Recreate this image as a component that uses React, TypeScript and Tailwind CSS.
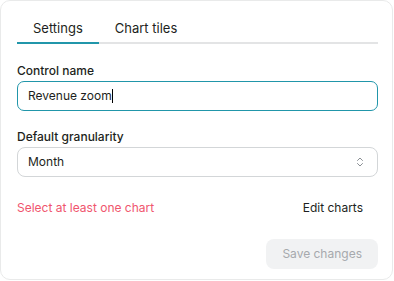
import React from "react";

export default function App() {
  return (
    <div
      className="w-[394px] h-[281px] bg-white"
      style={{ fontFamily: "Inter, 'Noto Sans', sans-serif" }}
    >
      <div className="w-[393px] h-[280px] border border-[#e9eaea] rounded-[10px] pl-4 pr-[14px] pt-[11px] text-[#1d1f21]">
        <div className="flex border-b-2 border-[#e3e4e5]">
          <div className="-mb-[2px] border-b-2 border-[#2196aa] px-4 pt-[6px] pb-[4px] text-[13px] leading-5 text-[#1d1f21]">
            Settings
          </div>
          <div className="-mb-[2px] border-b-2 border-transparent px-4 pt-[6px] pb-[4px] text-[13px] leading-5 text-[#1d1f21]">
            Chart tiles
          </div>
        </div>

        <div className="mt-[17px] text-[12px] leading-5 font-medium text-[#1d1f21]">
          Control name
        </div>
        <div className="h-[30px] rounded-[7px] border border-[#2196aa] flex items-center px-[10px] text-[12px] text-[#1d1f21]">
          <span>Revenue zoom</span>
          <span className="inline-block w-px h-[14px] bg-black" />
        </div>

        <div className="mt-[16px] text-[12px] leading-5 font-medium text-[#1d1f21]">
          Default granularity
        </div>
        <div className="h-[30px] rounded-[8px] border border-[#d3d6d8] flex items-center justify-between px-[10px] text-[12px] text-[#1d1f21]">
          <span>Month</span>
          <svg width="10" height="12" viewBox="0 0 10 12" fill="none" className="mr-[2px]">
            <path d="M2.5 4.5 L5 2 L7.5 4.5" stroke="#8a8f94" strokeWidth="1" strokeLinecap="round" strokeLinejoin="round" />
            <path d="M2.5 7.5 L5 10 L7.5 7.5" stroke="#8a8f94" strokeWidth="1" strokeLinecap="round" strokeLinejoin="round" />
          </svg>
        </div>

        <div className="mt-[16px] h-[30px] flex items-center justify-between text-[12px]">
          <span className="text-[#f0566e]">Select at least one chart</span>
          <span className="px-[15px] text-[#1d1f21]">Edit charts</span>
        </div>

        <div className="mt-[16px] flex justify-end">
          <div className="h-[30px] px-4 rounded-[8px] bg-[#f1f2f3] text-[#a6a9ad] text-[12px] flex items-center">
            Save changes
          </div>
        </div>
      </div>
    </div>
  );
}
